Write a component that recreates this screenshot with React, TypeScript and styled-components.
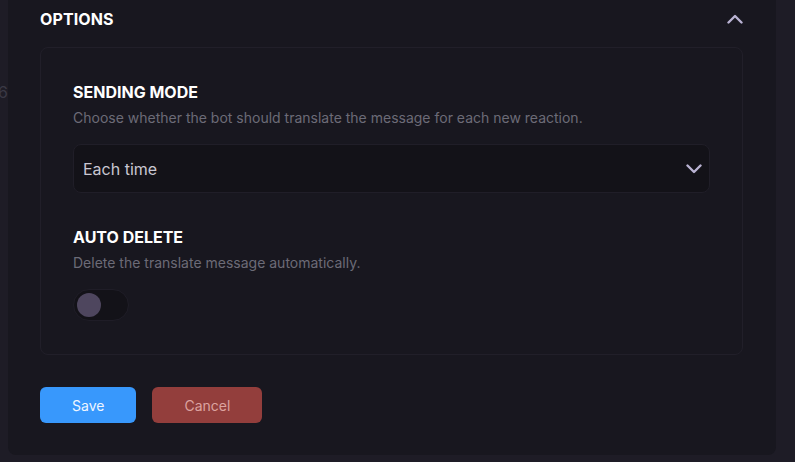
import styled, { createGlobalStyle } from "styled-components";

const GlobalStyle = createGlobalStyle`
  html, body {
    margin: 0;
    padding: 0;
    background: #1e1c26;
    font-family: Inter, "Noto Sans", sans-serif;
    overflow: hidden;
  }
`;

const Page = styled.div`
  display: flex;
  width: 795px;
  height: 462px;
`;

const Gutter = styled.div`
  width: 8px;
  overflow: hidden;
  display: flex;
  justify-content: flex-end;
  padding-top: 80px;
  color: #3a3945;
  font-size: 16px;
  line-height: 24px;
  white-space: nowrap;
`;

const Panel = styled.section`
  width: 768px;
  height: 455px;
  box-sizing: border-box;
  background: #18171f;
  border-radius: 0 0 8px 8px;
  padding: 0 33px 0 32px;
  display: flex;
  flex-direction: column;
`;

const Header = styled.div`
  height: 38px;
  display: flex;
  align-items: center;
  justify-content: space-between;
`;

const Title = styled.h2`
  margin: 0;
  font-size: 16px;
  font-weight: 700;
  color: #ffffff;
  letter-spacing: 0.1px;
`;

const Card = styled.div`
  margin-top: 9px;
  border: 1px solid #211f29;
  border-radius: 8px;
  padding: 32px 32px 33px;
  display: flex;
  flex-direction: column;
  gap: 32px;
`;

const Field = styled.div`
  display: flex;
  flex-direction: column;
`;

const FieldTitle = styled.h3`
  margin: 0;
  font-size: 16px;
  line-height: 24px;
  font-weight: 700;
  color: #ffffff;
`;

const FieldDesc = styled.p`
  margin: 4px 0 16px;
  font-size: 14px;
  line-height: 20px;
  color: #6c6b77;
`;

const Select = styled.div`
  height: 49px;
  box-sizing: border-box;
  border: 1px solid #201e28;
  border-radius: 8px;
  background: #131218;
  display: flex;
  align-items: center;
  justify-content: space-between;
  padding: 0 7px 0 9px;
  font-size: 16px;
  color: #c9c7d2;
`;

const Toggle = styled.div<{ $on?: boolean }>`
  width: 56px;
  height: 32px;
  box-sizing: border-box;
  border: 1px solid #1f1d27;
  border-radius: 16px;
  background: #131218;
  display: flex;
  align-items: center;
  justify-content: ${(p) => (p.$on ? "flex-end" : "flex-start")};
  padding: 0 3px;
`;

const Knob = styled.span`
  width: 24px;
  height: 24px;
  border-radius: 50%;
  background: #4e465e;
`;

const Actions = styled.div`
  margin-top: 32px;
  display: flex;
  gap: 16px;
`;

const Button = styled.button<{ $variant: "primary" | "danger" }>`
  height: 36px;
  padding: 0 32px;
  border: none;
  border-radius: 6px;
  font-family: inherit;
  font-size: 14px;
  background: ${(p) => (p.$variant === "primary" ? "#3898fc" : "#933e3c")};
  color: ${(p) => (p.$variant === "primary" ? "#eef5ff" : "#dca3a0")};
`;

const Chevron = ({ up }: { up?: boolean }) => (
  <svg width="16" height="10" viewBox="0 0 16 10" fill="none">
    <polyline
      points={up ? "1.5,8.5 8,2 14.5,8.5" : "1.5,1.5 8,8 14.5,1.5"}
      stroke="#bab3d3"
      strokeWidth="2.4"
      strokeLinecap="round"
      strokeLinejoin="round"
    />
  </svg>
);

export default function App() {
  return (
    <>
      <GlobalStyle />
      <Page>
        <Gutter>
          <span>76</span>
        </Gutter>
        <Panel>
          <Header>
            <Title>OPTIONS</Title>
            <Chevron up />
          </Header>
          <Card>
            <Field>
              <FieldTitle>SENDING MODE</FieldTitle>
              <FieldDesc>
                Choose whether the bot should translate the message for each new reaction.
              </FieldDesc>
              <Select>
                <span>Each time</span>
                <Chevron />
              </Select>
            </Field>
            <Field>
              <FieldTitle>AUTO DELETE</FieldTitle>
              <FieldDesc>Delete the translate message automatically.</FieldDesc>
              <Toggle>
                <Knob />
              </Toggle>
            </Field>
          </Card>
          <Actions>
            <Button $variant="primary">Save</Button>
            <Button $variant="danger">Cancel</Button>
          </Actions>
        </Panel>
      </Page>
    </>
  );
}
